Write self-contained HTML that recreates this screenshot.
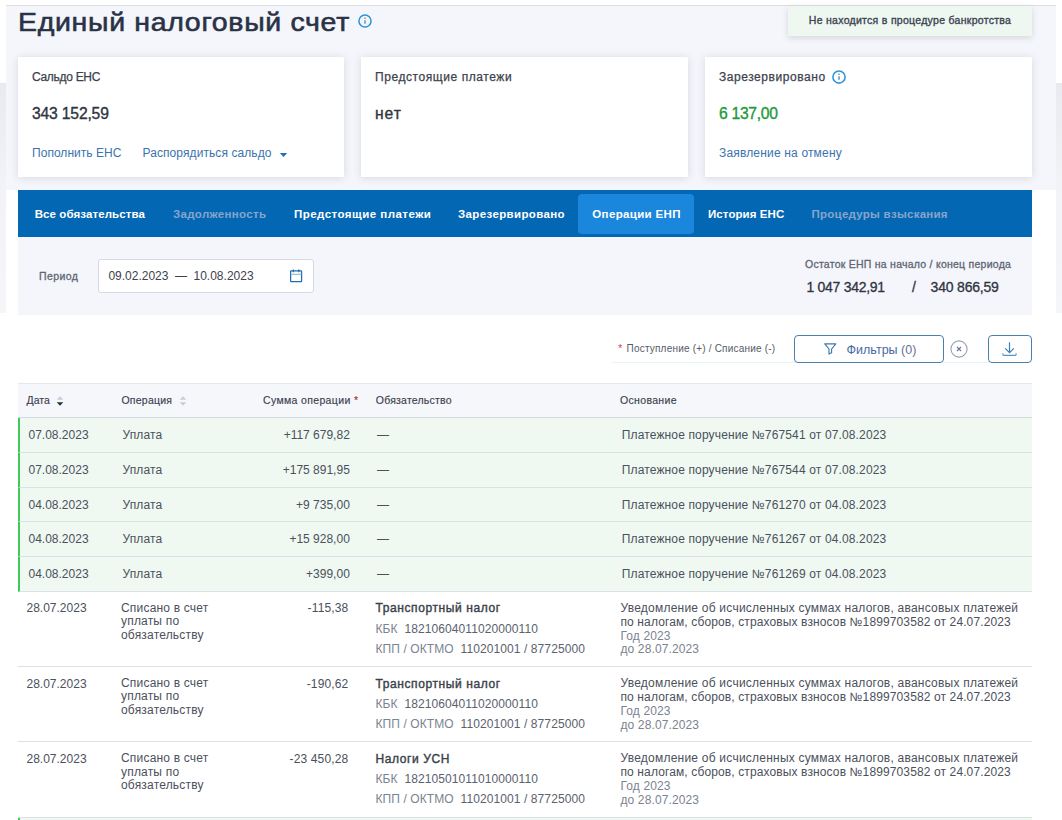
<!DOCTYPE html>
<html lang="ru">
<head>
<meta charset="utf-8">
<title>Единый налоговый счет</title>
<style>
*{box-sizing:border-box;margin:0;padding:0}
html,body{width:1062px;height:820px;overflow:hidden;background:#fff}
body{font-family:"Liberation Sans",sans-serif;color:#3d424d;position:relative;font-size:13px}
.abs{position:absolute}
.strip{background:linear-gradient(#e9eaef,#f2f3f7 45%,#f5f6fa)}
#page{left:6px;top:5px;width:1050px;height:185px;background:#f5f6fb;border-top:1px solid #dcdee4}
h1{left:17.5px;top:4px;font-size:26.5px;line-height:36px;font-weight:normal;color:#2a3246;white-space:nowrap;letter-spacing:.63px;-webkit-text-stroke:.6px #2a3246;transform:scaleX(1.075);transform-origin:0 0}
.badge{left:788px;top:6px;width:244px;height:30px;background:#eef8f1;box-shadow:0 2px 6px rgba(50,55,75,.16);font-size:10.5px;color:#3c4452;-webkit-text-stroke:.35px #3c4452;text-align:center;line-height:28px;white-space:nowrap}
.card{top:57px;width:326px;height:120px;background:#fff;box-shadow:0 1px 8px rgba(50,55,75,.15)}
.card .t{position:absolute;left:14px;top:12px;font-size:12px;-webkit-text-stroke:.25px #3c424e;color:#3c424e;white-space:nowrap;line-height:16px}
.card .v{position:absolute;left:14px;top:47px;font-size:15.7px;-webkit-text-stroke:.35px;color:#2f3440;white-space:nowrap;line-height:20px}
.card .l{position:absolute;top:88px;font-size:12px;color:#3c73ad;white-space:nowrap;line-height:16px}
#nav{left:18px;top:190px;width:1014px;height:47px;background:#0467b4}
#nav span{position:absolute;top:12px;font-size:11.5px;font-weight:bold;color:#fff;white-space:nowrap;line-height:24px}
#nav span.dis{color:#86a5cb}
#nav .act{position:absolute;left:560px;top:4px;width:116px;height:40px;background:#1a86dc;border-radius:4px}
#filt{left:18px;top:237px;width:1014px;height:78px;background:#f5f6fb}

#filt .lab{position:absolute;left:21px;top:31px;font-size:10.5px;-webkit-text-stroke:.3px;color:#5d6675;line-height:16px;white-space:nowrap}
#filt .inp{position:absolute;left:80px;top:22px;width:216px;height:33.5px;background:#fff;border:1px solid #d6dae3;border-radius:3px}
#filt .inp span{position:absolute;left:9.4px;top:8px;font-size:12px;word-spacing:3.2px;color:#3d424d;line-height:16px;white-space:nowrap}
#filt .inp svg{position:absolute;left:191px;top:8.8px}
#filt .rl{position:absolute;left:787px;top:20px;font-size:10.5px;-webkit-text-stroke:.3px;color:#5d6675;line-height:14px;white-space:nowrap}
#filt .rv{position:absolute;top:41px;font-size:14px;-webkit-text-stroke:.3px;color:#2f3440;line-height:18px;white-space:nowrap}
.note{left:618.3px;top:342.2px;font-size:10px;color:#555b68;line-height:14px;white-space:nowrap}
.note i{color:#e0343c;font-style:normal;margin-right:1.2px}
.btn{top:335px;height:27.5px;border:1px solid #4a80ac;border-radius:4px;background:#fff}
.btn span{position:absolute;left:51.6px;top:6px;font-size:12.5px;color:#456b9f;line-height:16px;white-space:nowrap}
.btn svg{position:absolute}
#thead{left:18px;top:383px;width:1014px;height:35px;background:#f6f7fb;border-top:1px solid #e4e6ee;border-bottom:1px solid #d3dae2}
#thead span{position:absolute;top:9px;font-size:10.5px;color:#3a3f4d;line-height:14px;white-space:nowrap;-webkit-text-stroke:.15px #3a3f4d}
#thead span i{color:#e0343c;font-style:normal}
.row{left:18px;width:1014px;border-bottom:1px solid #dbe0e8;font-size:12px;color:#4b505c}
.row.g{background:#eff9f2;border-left:2px solid #3fcb58;height:34.75px}
.row.w{height:75.25px}
.row span,.row div{position:absolute;white-space:nowrap;line-height:16px}
.row.g span{top:9px}
.row .c1{left:8.5px}.row .c2{left:103px}.row .c3{right:683.6px;letter-spacing:.15px}.row .c4{left:357.5px}.row .c5{left:602.5px}
.row.g .c1{left:8.5px}.row.g .c2{left:102.5px;letter-spacing:.13px}.row.g .c3{right:682.2px;letter-spacing:0}.row.g .c4{left:357px}.row.g .c5{left:601.8px;letter-spacing:.14px}
.row.w .c1,.row.w .c3{top:8.5px}
.row.w .c2{top:9.8px;line-height:13.6px;white-space:normal;width:110px;letter-spacing:.19px}
.row.w .c4{top:8.5px}
.row.w .c4 b{color:#3a3f4a;font-weight:normal;-webkit-text-stroke:.4px;letter-spacing:.59px}
.row.w .k{left:357.5px;font-size:12px;color:#7b8391;letter-spacing:.09px}
.row.w .k em{font-style:normal;color:#5b616d}
.row.w .c5{top:10px;line-height:13.9px;white-space:nowrap;letter-spacing:.12px}
.row.w .c5 u{text-decoration:none;letter-spacing:.23px}
.row.w .c5 small{font-size:12px;color:#7b8391}
</style>
</head>
<body>
<div class="abs strip" style="left:0;top:83px;width:6px;height:230px"></div>
<div class="abs strip" style="left:1056px;top:83px;width:6px;height:230px"></div>
<div id="page" class="abs"></div>
<h1 class="abs">Единый налоговый счет</h1>
<svg class="abs" style="left:356.7px;top:13.1px" width="16" height="16" viewBox="0 0 16 16"><circle cx="8" cy="8" r="6.05" fill="none" stroke="#2b92dc" stroke-width="1.5"/><path d="M8 7.2v3.5" stroke="#4d7ea6" stroke-width="1.2"/><circle cx="8" cy="5.3" r=".8" fill="#4d7ea6"/></svg>
<div class="abs badge" style="letter-spacing:.29px">Не находится в процедуре банкротства</div>

<div class="abs card" style="left:18px">
  <div class="t" style="letter-spacing:-.3px">Сальдо ЕНС</div>
  <div class="v" style="letter-spacing:-.18px">343 152,59</div>
  <a class="l" style="left:14px;letter-spacing:.04px">Пополнить ЕНС</a>
  <a class="l" style="left:124.5px;letter-spacing:.08px">Распорядиться сальдо</a>
  <svg class="abs" style="left:261px;top:94.6px" width="9" height="6" viewBox="0 0 9 6"><path d="M.8 1h7.4L4.5 5z" fill="#1f70bd"/></svg>
</div>
<div class="abs card" style="left:361px;width:327px">
  <div class="t" style="letter-spacing:.57px">Предстоящие платежи</div>
  <div class="v" style="letter-spacing:.9px">нет</div>
</div>
<div class="abs card" style="left:705px;width:327px">
  <div class="t" style="letter-spacing:.55px">Зарезервировано</div>
  <svg class="abs" style="left:126px;top:12px" width="16" height="16" viewBox="0 0 16 16"><circle cx="8" cy="8" r="6.1" fill="none" stroke="#2b92dc" stroke-width="1.55"/><path d="M8 7.2v3.6" stroke="#4d7ea6" stroke-width="1.3"/><circle cx="8" cy="5.2" r=".8" fill="#4d7ea6"/></svg>
  <div class="v" style="color:#1f9a3c;letter-spacing:-.3px">6 137,00</div>
  <a class="l" style="left:14px;letter-spacing:.17px">Заявление на отмену</a>
</div>

<div id="nav" class="abs">
  <div class="act"></div>
  <span style="left:16.7px;letter-spacing:.09px">Все обязательства</span>
  <span class="dis" style="left:155px;letter-spacing:.32px">Задолженность</span>
  <span style="left:276px;letter-spacing:.47px">Предстоящие платежи</span>
  <span style="left:440px;letter-spacing:.36px">Зарезервировано</span>
  <span style="left:574.3px;letter-spacing:.35px">Операции ЕНП</span>
  <span style="left:690px;letter-spacing:.08px">История ЕНС</span>
  <span class="dis" style="left:793.5px;letter-spacing:.26px">Процедуры взыскания</span>
</div>
<div id="filt" class="abs">
  <div class="lab" style="letter-spacing:.39px">Период</div>
  <div class="inp"><span>09.02.2023 — 10.08.2023</span>
    <svg width="13" height="14" viewBox="0 0 13 14"><rect x=".6" y="1.8" width="11" height="10.8" rx=".6" fill="none" stroke="#1c6db2" stroke-width="1.25"/><path d="M.6 5.3h11" stroke="#86aacb" stroke-width="1" fill="none"/><path d="M3.4 .6v2.6M8.8 .6v2.6" stroke="#1c6db2" stroke-width="1.3" fill="none"/></svg>
  </div>
  <div class="rl" style="letter-spacing:.25px">Остаток ЕНП на начало / конец периода</div>
  <div class="rv" style="left:788.4px;letter-spacing:-.28px">1 047 342,91</div>
  <div class="rv" style="left:894px">/</div>
  <div class="rv" style="left:912.6px;letter-spacing:-.2px">340 866,59</div>
</div>
<div class="abs" style="left:612px;top:362px;width:390px;height:1px;background:#e6f7fa"></div>
<div class="abs note" style="letter-spacing:.2px"><i>*</i> Поступление (+) / Списание (-)</div>
<div class="abs btn" style="left:794px;width:150px">
  <svg style="left:28.6px;top:6.8px" width="14" height="13" viewBox="0 0 14 13"><path d="M.8 .8h11L7.6 6v3.8L5 11.1V6z" fill="none" stroke="#3d78ad" stroke-width="1.15" stroke-linejoin="round"/></svg>
  <span>Фильтры <i style="font-style:normal;color:#686f92">(0)</i></span>
</div>
<svg class="abs" style="left:949px;top:338.6px" width="20" height="20" viewBox="0 0 20 20"><circle cx="10" cy="10" r="8.1" fill="#fff" stroke="#9a9fb6" stroke-width="1.1"/><path d="M8 8l4 4M12 8l-4 4" stroke="#67789c" stroke-width="1.1"/></svg>
<div class="abs btn" style="left:988px;width:44px">
  <svg style="left:13px;top:5px" width="16" height="16" viewBox="0 0 16 16"><path d="M7.5 1.2v10M3.2 7.4l4.3 4.3 4.3-4.3" fill="none" stroke="#3d7fb3" stroke-width="1.2"/><path d="M.9 12.2v1.4q0 .8.8.8h11.6q.8 0 .8-.8v-1.4" fill="none" stroke="#5a93bd" stroke-width="1.1"/></svg>
</div>

<div id="thead" class="abs">
  <span style="left:8.6px">Дата</span>
  <span style="left:103.4px;letter-spacing:.24px">Операция</span>
  <span style="left:245px;letter-spacing:.35px">Сумма операции <i>*</i></span>
  <span style="left:357.8px;letter-spacing:.21px">Обязательство</span>
  <span style="left:602px;letter-spacing:.33px">Основание</span>
  <svg class="abs" style="left:38px;top:11px" width="8" height="12" viewBox="0 0 8 12"><path d="M4 1.2l3.3 3.6H.7z" fill="#c9cdd8"/><path d="M4 10.8l3.3-3.6H.7z" fill="#2a2f3a"/></svg>
  <svg class="abs" style="left:161px;top:11px" width="8" height="12" viewBox="0 0 8 12"><path d="M4 1.2l3.3 3.6H.7z" fill="#c9cdd8"/><path d="M4 10.8l3.3-3.6H.7z" fill="#c9cdd8"/></svg>
</div>
<div class="abs row g" style="top:418.00px"><span class="c1">07.08.2023</span><span class="c2">Уплата</span><span class="c3">+117 679,82</span><span class="c4">—</span><span class="c5">Платежное поручение №767541 от 07.08.2023</span></div>
<div class="abs row g" style="top:452.75px"><span class="c1">07.08.2023</span><span class="c2">Уплата</span><span class="c3">+175 891,95</span><span class="c4">—</span><span class="c5">Платежное поручение №767544 от 07.08.2023</span></div>
<div class="abs row g" style="top:487.50px"><span class="c1">04.08.2023</span><span class="c2">Уплата</span><span class="c3">+9 735,00</span><span class="c4">—</span><span class="c5">Платежное поручение №761270 от 04.08.2023</span></div>
<div class="abs row g" style="top:522.25px"><span class="c1">04.08.2023</span><span class="c2">Уплата</span><span class="c3">+15 928,00</span><span class="c4">—</span><span class="c5">Платежное поручение №761267 от 04.08.2023</span></div>
<div class="abs row g" style="top:557.00px"><span class="c1">04.08.2023</span><span class="c2">Уплата</span><span class="c3">+399,00</span><span class="c4">—</span><span class="c5">Платежное поручение №761269 от 04.08.2023</span></div>
<div class="abs row w" style="top:591.75px"><span class="c1">28.07.2023</span><div class="c2">Списано в счет уплаты по обязательству</div><span class="c3">-115,38</span><span class="c4"><b>Транспортный налог</b></span>
  <span class="k" style="top:29px">КБК&nbsp; <em>18210604011020000110</em></span><span class="k" style="top:49px">КПП / ОКТМО&nbsp; <em>110201001 / 87725000</em></span>
  <div class="c5"><u>Уведомление об исчисленных суммах налогов, авансовых платежей</u><br>по налогам, сборов, страховых взносов №1899703582 от 24.07.2023<br><small>Год 2023<br>до 28.07.2023</small></div></div>
<div class="abs row w" style="top:667.00px"><span class="c1">28.07.2023</span><div class="c2">Списано в счет уплаты по обязательству</div><span class="c3">-190,62</span><span class="c4"><b>Транспортный налог</b></span>
  <span class="k" style="top:29px">КБК&nbsp; <em>18210604011020000110</em></span><span class="k" style="top:49px">КПП / ОКТМО&nbsp; <em>110201001 / 87725000</em></span>
  <div class="c5"><u>Уведомление об исчисленных суммах налогов, авансовых платежей</u><br>по налогам, сборов, страховых взносов №1899703582 от 24.07.2023<br><small>Год 2023<br>до 28.07.2023</small></div></div>
<div class="abs row w" style="top:742.25px"><span class="c1">28.07.2023</span><div class="c2">Списано в счет уплаты по обязательству</div><span class="c3">-23 450,28</span><span class="c4"><b>Налоги УСН</b></span>
  <span class="k" style="top:29px">КБК&nbsp; <em>18210501011010000110</em></span><span class="k" style="top:49px">КПП / ОКТМО&nbsp; <em>110201001 / 87725000</em></span>
  <div class="c5"><u>Уведомление об исчисленных суммах налогов, авансовых платежей</u><br>по налогам, сборов, страховых взносов №1899703582 от 24.07.2023<br><small>Год 2023<br>до 28.07.2023</small></div></div>
<div class="abs row g" style="top:817.50px;height:10px"></div>

</body>
</html>
